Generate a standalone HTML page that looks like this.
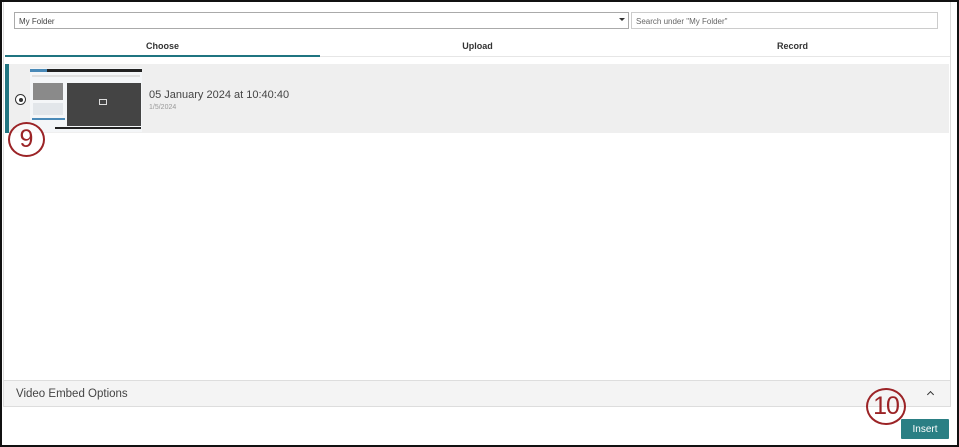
<!DOCTYPE html>
<html><head><meta charset="utf-8"><style>
*{box-sizing:border-box;margin:0;padding:0}
html,body{width:959px;height:447px;background:#fff;font-family:"Liberation Sans",sans-serif;overflow:hidden}
#w{position:absolute;left:0;top:0;width:959px;height:447px}
.abs{position:absolute}
</style></head><body><div id="w">
<div class="abs" style="left:3px;top:2px;width:948px;height:405px;border-right:1px solid #ddd;border-left:1px solid #ddd"></div>
<div class="abs" style="left:14px;top:12px;width:615px;height:17px;border:1px solid #aaa;font-size:8px;color:#444;padding:4px 4px 0">My Folder</div>
<div class="abs" style="left:619px;top:18px;width:0;height:0;border-left:3px solid transparent;border-right:3px solid transparent;border-top:3px solid #333"></div>
<div class="abs" style="left:631px;top:12px;width:307px;height:17px;border:1px solid #ccc;font-size:8px;color:#666;padding:4px 4px 0">Search under "My Folder"</div>
<div class="abs" style="left:5px;top:41px;width:315px;text-align:center;font-size:9px;font-weight:bold;color:#333">Choose</div>
<div class="abs" style="left:320px;top:41px;width:315px;text-align:center;font-size:9px;font-weight:bold;color:#333">Upload</div>
<div class="abs" style="left:635px;top:41px;width:315px;text-align:center;font-size:9px;font-weight:bold;color:#333">Record</div>
<div class="abs" style="left:5px;top:55px;width:315px;height:2px;background:#1f7480"></div>
<div class="abs" style="left:320px;top:56px;width:630px;height:1px;background:#e6e6e6"></div>
<div class="abs" style="left:5px;top:64px;width:944px;height:69px;background:#efefef"></div>
<div class="abs" style="left:5px;top:64px;width:4px;height:69px;background:#1f7480"></div>
<div class="abs" style="left:15px;top:94px;width:11px;height:11px;border:1.5px solid #333;border-radius:50%;background:#fff"></div>
<div class="abs" style="left:18.5px;top:97.5px;width:4px;height:4px;border-radius:50%;background:#333"></div>
<div class="abs" style="left:30px;top:68px;width:112px;height:64px;background:#f4f6f8"></div>
<div class="abs" style="left:30px;top:69px;width:112px;height:3px;background:#222"></div>
<div class="abs" style="left:30px;top:69px;width:17px;height:3px;background:#4a8ab8"></div>
<div class="abs" style="left:32px;top:75px;width:108px;height:2px;background:#e0e0e0"></div>
<div class="abs" style="left:67px;top:83px;width:74px;height:43px;background:#444"></div>
<div class="abs" style="left:99px;top:99px;width:8px;height:6px;border:1px solid #ddd"></div>
<div class="abs" style="left:33px;top:83px;width:30px;height:17px;background:#8a8a8a"></div>
<div class="abs" style="left:33px;top:103px;width:30px;height:12px;background:#e2e6ea"></div>
<div class="abs" style="left:32px;top:118px;width:33px;height:2px;background:#4a8ab8"></div>
<div class="abs" style="left:55px;top:127px;width:86px;height:2px;background:#222"></div>
<div class="abs" style="left:149px;top:89px;font-size:11px;color:#444">05 January 2024 at 10:40:40</div>
<div class="abs" style="left:149px;top:104px;font-size:7px;color:#999">1/5/2024</div>
<div class="abs" style="left:8px;top:122px;width:37px;height:35px;border:2px solid #9b2326;border-radius:50%;background:rgba(255,255,255,.6);color:#9b2326;font-size:25px;text-align:center;line-height:31px">9</div>
<div class="abs" style="left:4px;top:380px;width:946px;height:27px;background:#f4f4f4;border-top:1px solid #ddd;border-bottom:1px solid #ddd"></div>
<div class="abs" style="left:16px;top:388px;font-size:11.5px;color:#444">Video Embed Options</div>
<div class="abs" style="left:928px;top:392px;width:5px;height:5px;border-left:1.5px solid #333;border-top:1.5px solid #333;transform:rotate(45deg)"></div>
<div class="abs" style="left:901px;top:419px;width:48px;height:20px;background:#2a7f84;color:#fff;font-size:10px;text-align:center;line-height:21px;border-radius:1px">Insert</div>
<div class="abs" style="left:866px;top:388px;width:40px;height:37px;border:2px solid #9b2326;border-radius:50%;color:#9b2326;font-size:25px;text-align:center;line-height:33px;letter-spacing:-1px">10</div>
<div class="abs" style="left:0;top:0;width:959px;height:447px;border:2px solid #111"></div>
</div></body></html>
